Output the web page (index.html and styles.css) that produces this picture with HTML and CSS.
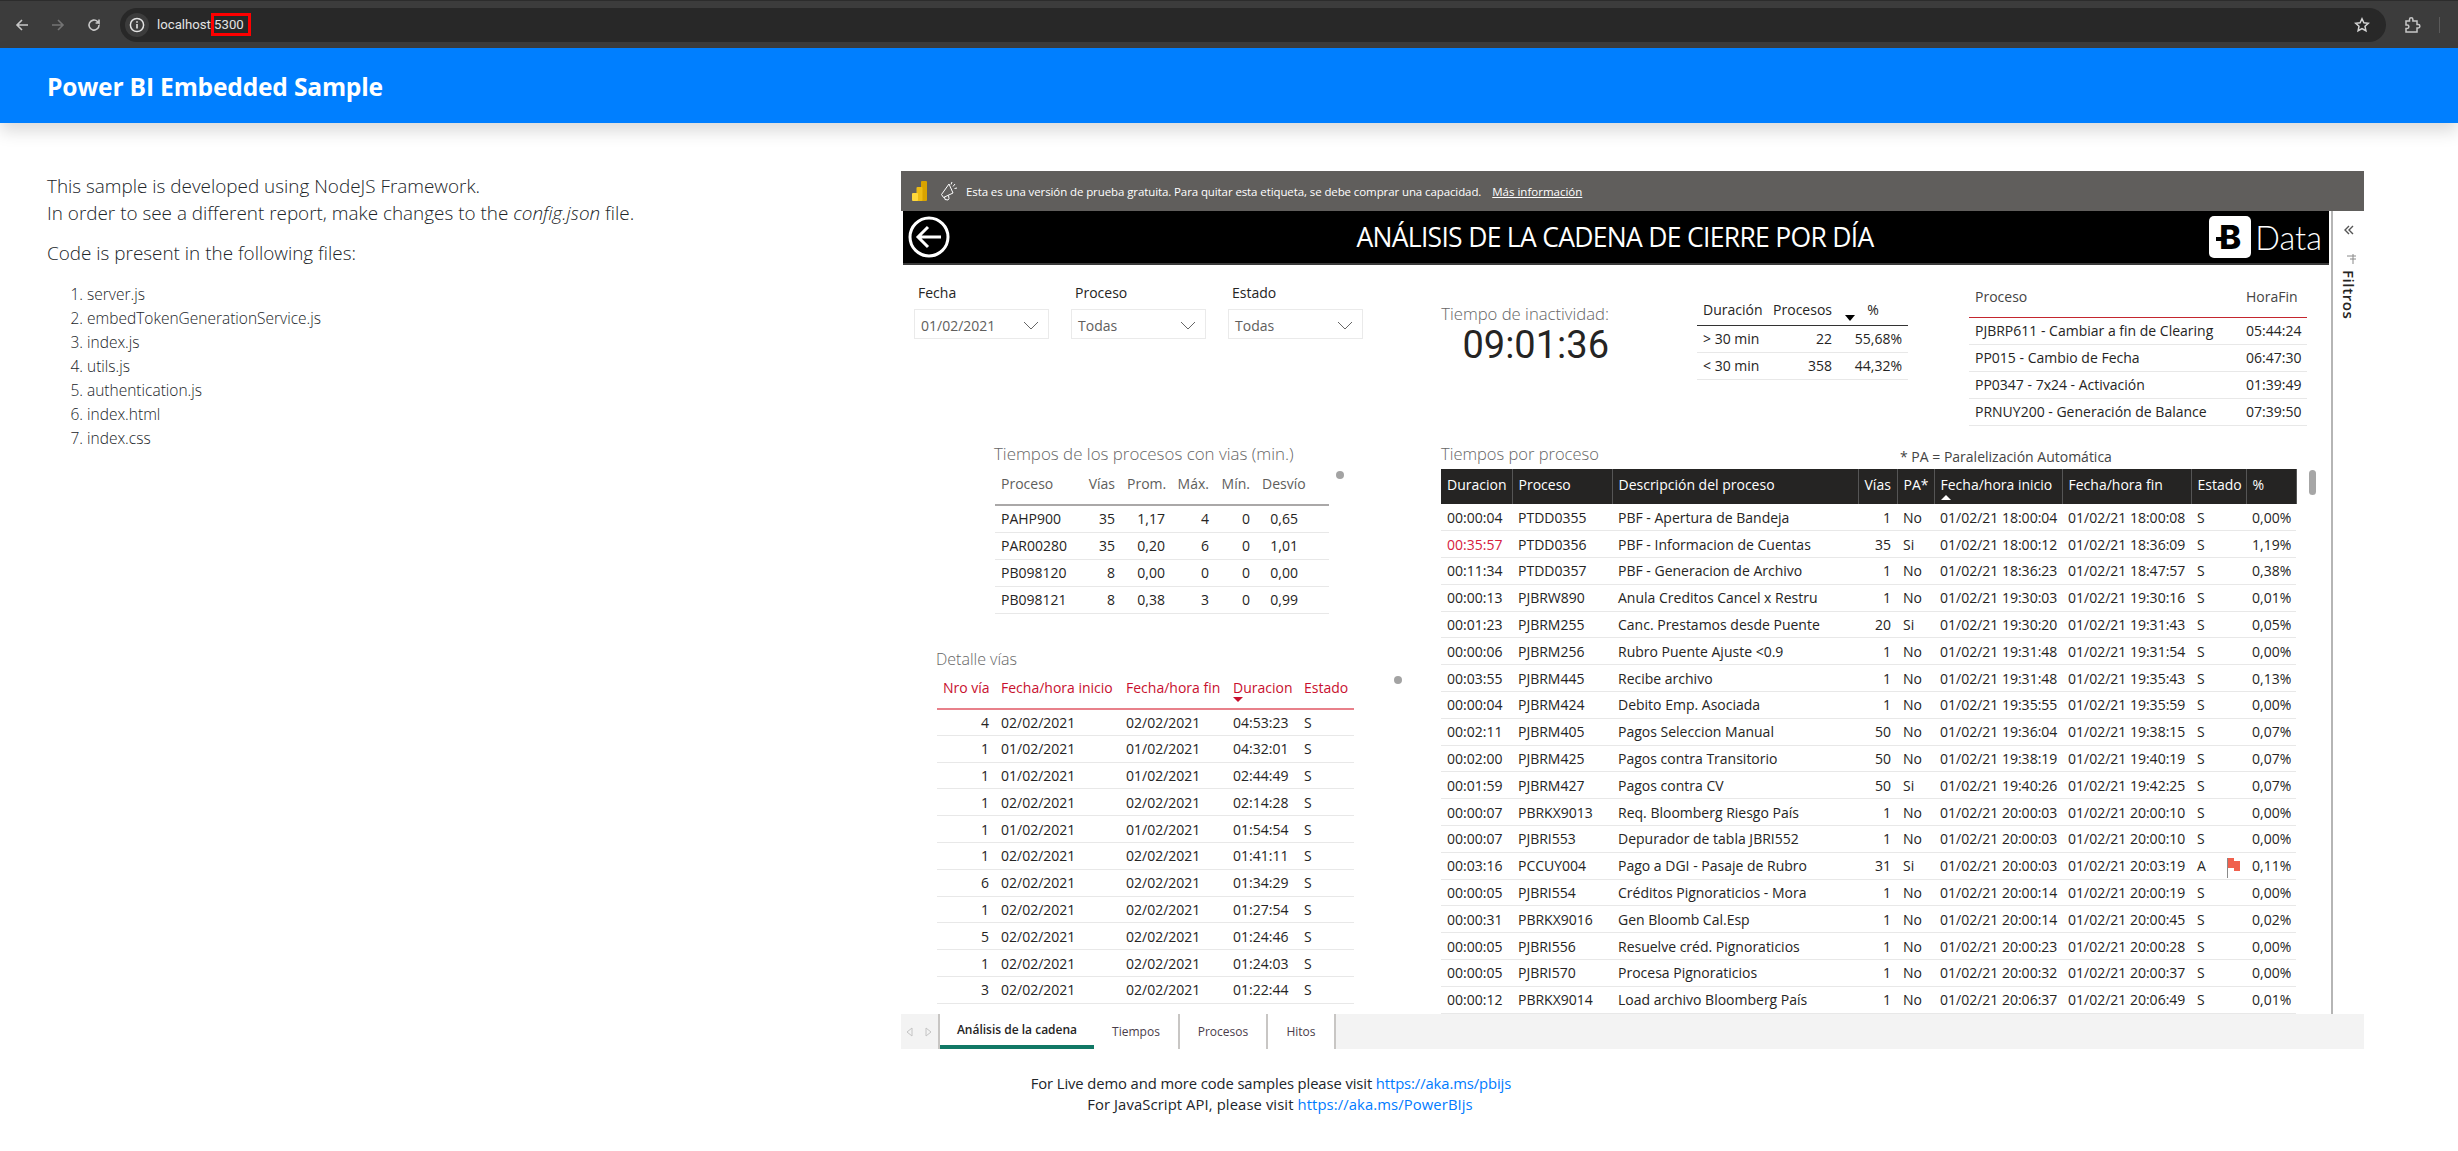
FILE: index.html
```html
<!DOCTYPE html>
<html lang="en">
<head>
  <meta charset="UTF-8">
  <title>Power BI Embedded Sample</title>
  <link rel="stylesheet" href="styles.css">
</head>
<body>

  <div class="browser-bar">
    <svg class="nav-icon" width="16" height="16" viewBox="0 0 16 16"><path d="M14 8H3M8 3L3 8l5 5" fill="none" stroke="#c7c7c7" stroke-width="1.6"/></svg>
    <svg class="nav-icon" width="16" height="16" viewBox="0 0 16 16"><path d="M2 8h11M8 3l5 5-5 5" fill="none" stroke="#747474" stroke-width="1.6"/></svg>
    <svg class="nav-icon" width="16" height="16" viewBox="0 0 16 16"><path d="M13 8a5 5 0 1 1-1.5-3.5L13 6V2.5M13 6H9.6" fill="none" stroke="#c7c7c7" stroke-width="1.6"/></svg>
    <div class="omnibox">
      <span class="site-chip">
        <svg width="16" height="16" viewBox="0 0 16 16"><circle cx="8" cy="8" r="6.6" fill="none" stroke="#e3e3e3" stroke-width="1.5"/><path d="M8 7v4.4M8 4.3v1.5" stroke="#e3e3e3" stroke-width="1.6"/></svg>
      </span>
      <span class="url">localhost:<span class="url-port">5300</span></span>
      <svg class="star" width="16" height="16" viewBox="0 0 16 16"><path d="M8 1.8l1.9 4 4.4.5-3.3 3 .9 4.4L8 11.5l-3.9 2.2.9-4.4-3.3-3 4.4-.5z" fill="none" stroke="#d5d5d5" stroke-width="1.5"/></svg>
    </div>
    <svg class="ext-icon" width="18" height="18" viewBox="0 0 18 18"><path d="M3 5h3.5V3.5a1.7 1.7 0 0 1 3.4 0V5H14v3.6h1.2a1.7 1.7 0 0 1 0 3.4H14v4H3v-3.6h1.2a1.7 1.7 0 0 0 0-3.4H3z" fill="none" stroke="#c7c7c7" stroke-width="1.5"/></svg>
    <span class="bar-sep"></span>
  </div>

  <header class="page-header">Power BI Embedded Sample</header>

  <main class="page-main">
    <section class="intro">
      <p class="intro-text">This sample is developed using NodeJS Framework.<br>In order to see a different report, make changes to the <em>config.json</em> file.</p>
      <p class="intro-text">Code is present in the following files:</p>
      <ol class="file-list">
        <li>server.js</li>
        <li>embedTokenGenerationService.js</li>
        <li>index.js</li>
        <li>utils.js</li>
        <li>authentication.js</li>
        <li>index.html</li>
        <li>index.css</li>
      </ol>
    </section>

    <section class="report">
      <div class="trial-bar">
        <svg class="pbi-logo" width="15" height="20" viewBox="0 0 15 20">
          <rect x="9" y="0" width="6" height="20" rx="1" fill="#d9a300"/>
          <rect x="4.5" y="6" width="6" height="14" rx="1" fill="#eebc14"/>
          <rect x="0" y="12" width="6" height="8" rx="1" fill="#ffd83b"/>
        </svg>
        <svg class="trial-icon" width="18" height="20" viewBox="0 0 18 20"><path d="M9 3L1.5 13.5l2 3 9.5-4.5zM4.5 16l.5 2.5 3 .5 1-1.5-.5-3M12 1l-1 2.5M15 3l-2 2.5M17 7l-2.5.5" fill="none" stroke="#fff" stroke-width="1"/></svg>
        <span class="trial-text">Esta es una versión de prueba gratuita. Para quitar esta etiqueta, se debe comprar una capacidad.</span>
        <a class="trial-link">Más información</a>
      </div>

      <div class="report-body">
        <div class="canvas">
          <div class="report-title">
            <svg class="back-icon" width="42" height="42" viewBox="0 0 42 42"><circle cx="21" cy="21" r="19" fill="none" stroke="#fff" stroke-width="3"/><path d="M33 21H10M20 11L10 21l10 10" fill="none" stroke="#fff" stroke-width="3"/></svg>
            <h1 class="report-heading">ANÁLISIS DE LA CADENA DE CIERRE POR DÍA</h1>
            <div class="brand">
              <span class="brand-mark">B</span>
              <span class="brand-name">Data</span>
            </div>
          </div>

          <div class="top-row">
            <div class="slicer slicer-first">
              <div class="slicer-label">Fecha</div>
              <div class="slicer-box">01/02/2021<svg class="chevron" width="16" height="9" viewBox="0 0 16 9"><path d="M1 1l7 7 7-7" fill="none" stroke="#666" stroke-width="1"/></svg></div>
            </div>
            <div class="slicer">
              <div class="slicer-label">Proceso</div>
              <div class="slicer-box">Todas<svg class="chevron" width="16" height="9" viewBox="0 0 16 9"><path d="M1 1l7 7 7-7" fill="none" stroke="#666" stroke-width="1"/></svg></div>
            </div>
            <div class="slicer">
              <div class="slicer-label">Estado</div>
              <div class="slicer-box">Todas<svg class="chevron" width="16" height="9" viewBox="0 0 16 9"><path d="M1 1l7 7 7-7" fill="none" stroke="#666" stroke-width="1"/></svg></div>
            </div>

            <div class="kpi">
              <div class="kpi-label">Tiempo de inactividad:</div>
              <div class="kpi-value">09:01:36</div>
            </div>

            <table class="grid summary-table">
              <colgroup><col class="w70"><col class="w71"><col class="w70"></colgroup>
              <thead>
                <tr><th>Duración</th><th class="num sort-col">Procesos</th><th class="center">%</th></tr>
              </thead>
              <tbody>
                <tr><td>&gt; 30 min</td><td class="num">22</td><td class="num">55,68%</td></tr>
                <tr><td>&lt; 30 min</td><td class="num">358</td><td class="num">44,32%</td></tr>
              </tbody>
            </table>

            <table class="grid end-table">
              <colgroup><col class="w271"><col class="w67"></colgroup>
              <thead>
                <tr><th>Proceso</th><th>HoraFin</th></tr>
              </thead>
              <tbody>
                <tr><td>PJBRP611 - Cambiar a fin de Clearing</td><td>05:44:24</td></tr>
                <tr><td>PP015 - Cambio de Fecha</td><td>06:47:30</td></tr>
                <tr><td>PP0347 - 7x24 - Activación</td><td>01:39:49</td></tr>
                <tr><td>PRNUY200 - Generación de Balance</td><td>07:39:50</td></tr>
              </tbody>
            </table>
          </div>

          <div class="bottom-row">
            <div class="left-col">
              <div class="routes-block">
                <h2 class="visual-title">Tiempos de los procesos con vias (min.)</h2>
                <div class="visual-row">
                  <table class="grid routes-table">
                    <colgroup><col class="w87"><col class="w39"><col class="w50"><col class="w44"><col class="w41"><col class="w73"></colgroup>
                    <thead>
                      <tr><th>Proceso</th><th class="num">Vías</th><th class="num">Prom.</th><th class="num">Máx.</th><th class="num">Mín.</th><th>Desvío</th></tr>
                    </thead>
                    <tbody>
                      <tr><td>PAHP900</td><td class="num">35</td><td class="num">1,17</td><td class="num">4</td><td class="num">0</td><td class="num desvio">0,65</td></tr>
                      <tr><td>PAR00280</td><td class="num">35</td><td class="num">0,20</td><td class="num">6</td><td class="num">0</td><td class="num desvio">1,01</td></tr>
                      <tr><td>PB098120</td><td class="num">8</td><td class="num">0,00</td><td class="num">0</td><td class="num">0</td><td class="num desvio">0,00</td></tr>
                      <tr><td>PB098121</td><td class="num">8</td><td class="num">0,38</td><td class="num">3</td><td class="num">0</td><td class="num desvio">0,99</td></tr>
                    </tbody>
                  </table>
                  <span class="dot dot-routes"></span>
                </div>
              </div>

              <div class="detail-block">
                <h2 class="visual-title">Detalle vías</h2>
                <div class="visual-row">
                  <table class="grid detail-table">
                    <colgroup><col class="w58"><col class="w125"><col class="w107"><col class="w71"><col class="w56"></colgroup>
                    <thead>
                      <tr><th class="num">Nro vía</th><th>Fecha/hora inicio</th><th>Fecha/hora fin</th><th class="sort-down">Duracion</th><th>Estado</th></tr>
                    </thead>
                    <tbody>
                      <tr><td class="num">4</td><td>02/02/2021</td><td>02/02/2021</td><td>04:53:23</td><td>S</td></tr>
                      <tr><td class="num">1</td><td>01/02/2021</td><td>01/02/2021</td><td>04:32:01</td><td>S</td></tr>
                      <tr><td class="num">1</td><td>01/02/2021</td><td>01/02/2021</td><td>02:44:49</td><td>S</td></tr>
                      <tr><td class="num">1</td><td>02/02/2021</td><td>02/02/2021</td><td>02:14:28</td><td>S</td></tr>
                      <tr><td class="num">1</td><td>01/02/2021</td><td>01/02/2021</td><td>01:54:54</td><td>S</td></tr>
                      <tr><td class="num">1</td><td>02/02/2021</td><td>02/02/2021</td><td>01:41:11</td><td>S</td></tr>
                      <tr><td class="num">6</td><td>02/02/2021</td><td>02/02/2021</td><td>01:34:29</td><td>S</td></tr>
                      <tr><td class="num">1</td><td>02/02/2021</td><td>02/02/2021</td><td>01:27:54</td><td>S</td></tr>
                      <tr><td class="num">5</td><td>02/02/2021</td><td>02/02/2021</td><td>01:24:46</td><td>S</td></tr>
                      <tr><td class="num">1</td><td>02/02/2021</td><td>02/02/2021</td><td>01:24:03</td><td>S</td></tr>
                      <tr><td class="num">3</td><td>02/02/2021</td><td>02/02/2021</td><td>01:22:44</td><td>S</td></tr>
                    </tbody>
                  </table>
                  <span class="dot dot-detail"></span>
                </div>
              </div>
            </div>

            <div class="right-col">
              <div class="process-head">
                <h2 class="visual-title">Tiempos por proceso</h2>
                <span class="pa-note">* PA = Paralelización Automática</span>
              </div>
              <div class="visual-row">
                <table class="grid process-table">
                  <colgroup><col class="w71"><col class="w100"><col class="w246"><col class="w39"><col class="w37"><col class="w128"><col class="w129"><col class="w55"><col class="w50"></colgroup>
                  <thead>
                    <tr><th>Duracion</th><th>Proceso</th><th>Descripción del proceso</th><th>Vías</th><th>PA*</th><th class="sort-up">Fecha/hora inicio</th><th>Fecha/hora fin</th><th>Estado</th><th>%</th></tr>
                  </thead>
                  <tbody>
                    <tr><td>00:00:04</td><td>PTDD0355</td><td>PBF - Apertura de Bandeja</td><td class="num">1</td><td>No</td><td>01/02/21 18:00:04</td><td>01/02/21 18:00:08</td><td>S</td><td class="num">0,00%</td></tr>
                    <tr><td class="late">00:35:57</td><td>PTDD0356</td><td>PBF - Informacion de Cuentas</td><td class="num">35</td><td>Si</td><td>01/02/21 18:00:12</td><td>01/02/21 18:36:09</td><td>S</td><td class="num">1,19%</td></tr>
                    <tr><td>00:11:34</td><td>PTDD0357</td><td>PBF - Generacion de Archivo</td><td class="num">1</td><td>No</td><td>01/02/21 18:36:23</td><td>01/02/21 18:47:57</td><td>S</td><td class="num">0,38%</td></tr>
                    <tr><td>00:00:13</td><td>PJBRW890</td><td>Anula Creditos Cancel x Restru</td><td class="num">1</td><td>No</td><td>01/02/21 19:30:03</td><td>01/02/21 19:30:16</td><td>S</td><td class="num">0,01%</td></tr>
                    <tr><td>00:01:23</td><td>PJBRM255</td><td>Canc. Prestamos desde Puente</td><td class="num">20</td><td>Si</td><td>01/02/21 19:30:20</td><td>01/02/21 19:31:43</td><td>S</td><td class="num">0,05%</td></tr>
                    <tr><td>00:00:06</td><td>PJBRM256</td><td>Rubro Puente Ajuste &lt;0.9</td><td class="num">1</td><td>No</td><td>01/02/21 19:31:48</td><td>01/02/21 19:31:54</td><td>S</td><td class="num">0,00%</td></tr>
                    <tr><td>00:03:55</td><td>PJBRM445</td><td>Recibe archivo</td><td class="num">1</td><td>No</td><td>01/02/21 19:31:48</td><td>01/02/21 19:35:43</td><td>S</td><td class="num">0,13%</td></tr>
                    <tr><td>00:00:04</td><td>PJBRM424</td><td>Debito Emp. Asociada</td><td class="num">1</td><td>No</td><td>01/02/21 19:35:55</td><td>01/02/21 19:35:59</td><td>S</td><td class="num">0,00%</td></tr>
                    <tr><td>00:02:11</td><td>PJBRM405</td><td>Pagos Seleccion Manual</td><td class="num">50</td><td>No</td><td>01/02/21 19:36:04</td><td>01/02/21 19:38:15</td><td>S</td><td class="num">0,07%</td></tr>
                    <tr><td>00:02:00</td><td>PJBRM425</td><td>Pagos contra Transitorio</td><td class="num">50</td><td>No</td><td>01/02/21 19:38:19</td><td>01/02/21 19:40:19</td><td>S</td><td class="num">0,07%</td></tr>
                    <tr><td>00:01:59</td><td>PJBRM427</td><td>Pagos contra CV</td><td class="num">50</td><td>Si</td><td>01/02/21 19:40:26</td><td>01/02/21 19:42:25</td><td>S</td><td class="num">0,07%</td></tr>
                    <tr><td>00:00:07</td><td>PBRKX9013</td><td>Req. Bloomberg Riesgo País</td><td class="num">1</td><td>No</td><td>01/02/21 20:00:03</td><td>01/02/21 20:00:10</td><td>S</td><td class="num">0,00%</td></tr>
                    <tr><td>00:00:07</td><td>PJBRI553</td><td>Depurador de tabla JBRI552</td><td class="num">1</td><td>No</td><td>01/02/21 20:00:03</td><td>01/02/21 20:00:10</td><td>S</td><td class="num">0,00%</td></tr>
                    <tr><td>00:03:16</td><td>PCCUY004</td><td>Pago a DGI - Pasaje de Rubro</td><td class="num">31</td><td>Si</td><td>01/02/21 20:00:03</td><td>01/02/21 20:03:19</td><td>A<svg class="flag" width="13" height="20" viewBox="0 0 13 20"><path d="M.5 0v20" stroke="#8a8a8a"/><path d="M1 0h6v3h6v10H7v-3H1z" fill="#f0604d"/></svg></td><td class="num">0,11%</td></tr>
                    <tr><td>00:00:05</td><td>PJBRI554</td><td>Créditos Pignoraticios - Mora</td><td class="num">1</td><td>No</td><td>01/02/21 20:00:14</td><td>01/02/21 20:00:19</td><td>S</td><td class="num">0,00%</td></tr>
                    <tr><td>00:00:31</td><td>PBRKX9016</td><td>Gen Bloomb Cal.Esp</td><td class="num">1</td><td>No</td><td>01/02/21 20:00:14</td><td>01/02/21 20:00:45</td><td>S</td><td class="num">0,02%</td></tr>
                    <tr><td>00:00:05</td><td>PJBRI556</td><td>Resuelve créd. Pignoraticios</td><td class="num">1</td><td>No</td><td>01/02/21 20:00:23</td><td>01/02/21 20:00:28</td><td>S</td><td class="num">0,00%</td></tr>
                    <tr><td>00:00:05</td><td>PJBRI570</td><td>Procesa Pignoraticios</td><td class="num">1</td><td>No</td><td>01/02/21 20:00:32</td><td>01/02/21 20:00:37</td><td>S</td><td class="num">0,00%</td></tr>
                    <tr><td>00:00:12</td><td>PBRKX9014</td><td>Load archivo Bloomberg País</td><td class="num">1</td><td>No</td><td>01/02/21 20:06:37</td><td>01/02/21 20:06:49</td><td>S</td><td class="num">0,01%</td></tr>
                  </tbody>
                </table>
                <span class="scroll-thumb"></span>
              </div>
            </div>
          </div>
        </div>

        <aside class="filter-pane">
          <svg width="10" height="10" viewBox="0 0 10 10"><path d="M5 1L1 5l4 4M9 1L5 5l4 4" fill="none" stroke="#555" stroke-width="1.4"/></svg>
          <svg class="filter-icon" width="9" height="10" viewBox="0 0 9 10"><path d="M0 2h9M3 5h6M6 0v10" stroke="#8a8a8a" stroke-width="1"/></svg>
          <span class="filter-label">Filtros</span>
        </aside>
      </div>

      <nav class="tabs">
        <div class="tab-arrows">
          <svg width="7" height="10" viewBox="0 0 7 10"><path d="M6 1L1 5l5 4z" fill="none" stroke="#c4c4c4"/></svg>
          <svg width="7" height="10" viewBox="0 0 7 10"><path d="M1 1l5 4-5 4z" fill="none" stroke="#c4c4c4"/></svg>
        </div>
        <span class="tab tab-active">Análisis de la cadena</span>
        <span class="tab tab-times">Tiempos</span>
        <span class="tab tab-process">Procesos</span>
        <span class="tab tab-hitos">Hitos</span>
      </nav>
    </section>
  </main>

  <footer class="page-footer">
    <div class="footer-first">For Live demo and more code samples please visit <a class="footer-link">https://aka.ms/pbijs</a></div>
    <div class="footer-second">For JavaScript API, please visit <a class="footer-link">https://aka.ms/PowerBIjs</a></div>
  </footer>

</body>
</html>
```

FILE: styles.css
```css
* {
  box-sizing: border-box;
}

body {
  margin: 0;
  height: 1151px;
  overflow: hidden;
  background: #fff;
  color: #212529;
  font-family: 'Open Sans', 'Noto Sans', sans-serif;
  font-size: 14px;
}

/* browser chrome */
.browser-bar {
  display: flex;
  align-items: center;
  height: 48px;
  padding-left: 14px;
  background: #3c3c3c;
  border-top: 1px solid #2c2c2c;
}

.nav-icon {
  margin-right: 20px;
}

.omnibox {
  display: flex;
  align-items: center;
  width: 2266px;
  height: 34px;
  margin-left: -2px;
  padding: 0 16px 0 5px;
  border-radius: 17px;
  background: #282828;
  color: #e3e3e3;
  font-family: Roboto, sans-serif;
  font-size: 13.2px;
}

.site-chip {
  display: flex;
  align-items: center;
  justify-content: center;
  width: 24px;
  height: 24px;
  margin-right: 8px;
  border-radius: 50%;
  background: #3c3c3c;
}

.url {
  flex: 1;
}

.url-port {
  display: inline-block;
  padding: 0 4px 0 0;
  line-height: 17px;
  outline: 3px solid #f00;
  outline-offset: 0;
}

.ext-icon {
  margin-left: 17px;
}

.bar-sep {
  width: 1px;
  height: 16px;
  margin-left: 18px;
  background: #5a5a5a;
}

/* page */
.page-header {
  display: flex;
  align-items: center;
  height: 75px;
  padding: 2px 0 0 47px;
  background: #007fff;
  box-shadow: 0 8px 16px rgba(0, 0, 0, 0.15);
  color: #fff;
  font-size: 24.6px;
  font-weight: 700;
  letter-spacing: -0.2px;
}

.page-main {
  display: flex;
  padding-top: 48px;
}

.intro {
  width: 901px;
  padding: 2px 0 0 47px;
}

.intro-text {
  margin: 0 0 14px;
  font-size: 18.9px;
  line-height: 26.5px;
  font-weight: 300;
  color: #212529;
}

.file-list {
  margin: 15px 0 0;
  padding-left: 40px;
  font-size: 15.5px;
  line-height: 24px;
  font-weight: 300;
}

.page-footer {
  margin-top: 24px;
  padding-left: 102px;
  text-align: center;
  font-size: 14.8px;
  line-height: 21px;
}

.footer-first {
  padding-right: 18px;
  letter-spacing: -0.1px;
}

.footer-second {
  letter-spacing: 0.1px;
}

.footer-link {
  color: #007bff;
}

/* report frame */
.report {
  width: 1463px;
}

.trial-bar {
  display: flex;
  align-items: center;
  height: 40px;
  padding-left: 11px;
  background: #605e5c;
  color: #fff;
  font-size: 11.5px;
}

.trial-icon {
  margin: 0 8px 0 13px;
}

.trial-text {
  letter-spacing: -0.1px;
}

.trial-link {
  margin-left: 11px;
  text-decoration: underline;
}

.report-body {
  display: flex;
  height: 803px;
  margin-left: 2px;
}

.canvas {
  width: 1428px;
  overflow: hidden;
}

.report-title {
  display: grid;
  grid-template-columns: 1fr auto 1fr;
  align-items: center;
  width: 1426px;
  height: 54px;
  padding: 0 7px 0 5px;
  background: #000;
  border-bottom: 2px solid #3a3a3a;
}

.report-heading {
  margin: 0;
  color: #fff;
  font-size: 26.5px;
  font-weight: 400;
  letter-spacing: -0.7px;
}

.brand {
  display: flex;
  align-items: center;
  justify-content: flex-end;
}

.brand-mark {
  position: relative;
  width: 42px;
  height: 42px;
  border-radius: 5px;
  background: #fff;
  color: #000;
  font-family: Inter, sans-serif;
  font-size: 33px;
  font-weight: 800;
  line-height: 42px;
  text-align: center;
}

/* the notch that sticks out on the left of the B */
.brand-mark::before {
  content: "";
  position: absolute;
  left: 7px;
  top: 21px;
  width: 9px;
  height: 4px;
  background: #000;
}

.brand-name {
  margin-left: 4px;
  color: #fff;
  font-family: Lato, sans-serif;
  font-size: 32.5px;
  font-weight: 300;
}

.top-row {
  display: flex;
  align-items: flex-start;
  height: 175px;
}

.slicer {
  width: 135px;
  margin: 18px 0 0 22px;
}

.slicer-first {
  margin-left: 11px;
}

.slicer-label {
  padding-left: 4px;
  line-height: 20px;
  margin-bottom: 6px;
  color: #252423;
}

.slicer-box {
  display: flex;
  align-items: center;
  justify-content: space-between;
  height: 30px;
  padding: 3px 9px 0 6px;
  border: 1px solid #eaeaea;
  color: #605e5c;
}

.kpi {
  width: 168px;
  margin: 37px 0 0 78px;
  text-align: right;
}

.kpi-label {
  color: #666;
  font-size: 16.7px;
  font-weight: 300;
  line-height: 24px;
  white-space: nowrap;
}

.kpi-value {
  color: #252423;
  font-family: Roboto, sans-serif;
  font-size: 38px;
  line-height: 38px;
}

/* tables */
.grid {
  border-collapse: collapse;
  table-layout: fixed;
  color: #252423;
  font-size: 14px;
}

.grid th,
.grid td {
  padding: 0 6px;
  overflow: hidden;
  font-weight: 400;
  text-align: left;
  white-space: nowrap;
}

.grid td {
  height: 27px;
  border-bottom: 1px solid #e8e8e8;
}

.grid .num {
  text-align: right;
}

.grid .center {
  text-align: center;
}

.w39 { width: 39px; }
.w37 { width: 37px; }
.w41 { width: 41px; }
.w44 { width: 44px; }
.w50 { width: 50px; }
.w55 { width: 55px; }
.w56 { width: 56px; }
.w58 { width: 58px; }
.w67 { width: 67px; }
.w70 { width: 70px; }
.w71 { width: 71px; }
.w73 { width: 73px; }
.w87 { width: 87px; }
.w100 { width: 100px; }
.w107 { width: 107px; }
.w125 { width: 125px; }
.w128 { width: 128px; }
.w129 { width: 129px; }
.w246 { width: 246px; }
.w271 { width: 271px; }

.summary-table {
  width: 211px;
  margin: 30px 0 0 88px;
}

.summary-table th {
  position: relative;
  height: 30px;
  border-bottom: 1px solid #333;
}

.sort-col::after {
  content: "";
  position: absolute;
  right: -17px;
  bottom: 4px;
  border: 5px solid transparent;
  border-top: 6px solid #000;
  border-bottom: 0;
}

.summary-table .sort-col {
  overflow: visible;
}

.end-table {
  width: 338px;
  margin: 12px 0 0 61px;
}

.end-table th {
  height: 40px;
  border-bottom: 1px solid #c4262e;
  color: #444;
}

.bottom-row {
  display: flex;
  height: 574px;
  overflow: hidden;
}

.left-col {
  width: 538px;
  padding-top: 2px;
}

.visual-title {
  margin: 0;
  color: #666;
  font-size: 16px;
  font-weight: 300;
  line-height: 24px;
}

.visual-row {
  display: flex;
  align-items: flex-start;
}

.routes-block {
  margin-left: 91px;
}

.routes-block .visual-title {
  font-size: 16.9px;
}

.routes-block .visual-row {
  margin: 4px 0 0 1px;
}

.routes-table {
  width: 334px;
}

.routes-table th {
  height: 35px;
  padding-bottom: 8px;
  border-bottom: 2px solid #aaa8a8;
  color: #605e5c;
}

.grid .desvio {
  padding-right: 31px;
}

.detail-block {
  margin: 33px 0 0 33px;
}

.detail-block .visual-row {
  margin: 3px 0 0 1px;
}

.detail-table {
  width: 417px;
}

.detail-table th {
  position: relative;
  height: 35px;
  padding-bottom: 6px;
  border-bottom: 2px solid #e8808a;
  color: #c8102e;
}

.detail-table td,
.process-table td {
  height: 26.8px;
}

.sort-down::after {
  content: "";
  position: absolute;
  left: 6px;
  bottom: 6px;
  border: 5px solid transparent;
  border-top: 5px solid #c8102e;
  border-bottom: 0;
}

.dot {
  flex: none;
  width: 8px;
  height: 8px;
  border-radius: 50%;
  background: #a3a3a3;
}

.dot-routes {
  margin: 1px 0 0 7px;
}

.dot-detail {
  margin: 2px 0 0 40px;
}

.process-head {
  display: flex;
  height: 29px;
  padding-top: 2px;
}

.process-head .visual-title {
  width: 459px;
  font-size: 16.5px;
}

.pa-note {
  padding-top: 6px;
  color: #444;
  font-size: 14px;
  line-height: 18px;
}

.process-table {
  width: 855px;
}

.process-table th {
  position: relative;
  height: 35px;
  padding-bottom: 5px;
  border-right: 1px solid #555;
  background: #252423;
  color: #fff;
}

.process-table .late {
  color: #d6203e;
}

.sort-up::after {
  content: "";
  position: absolute;
  left: 6px;
  bottom: 4px;
  border: 5px solid transparent;
  border-bottom: 5px solid #fff;
  border-top: 0;
}

.flag {
  margin: -6px 0 -6px 21px;
  vertical-align: middle;
}

.scroll-thumb {
  flex: none;
  width: 7px;
  height: 25px;
  margin: 1px 0 0 12px;
  border-radius: 4px;
  background: #a6a6a6;
}

/* filter pane */
.filter-pane {
  display: flex;
  flex-direction: column;
  align-items: center;
  width: 33px;
  padding-top: 14px;
  border-left: 2px solid #b5b5b5;
}

.filter-icon {
  margin: 19px 0 0 5px;
}

.filter-label {
  margin-top: 6px;
  color: #252423;
  font-size: 15px;
  font-weight: 600;
  letter-spacing: 0.6px;
  writing-mode: vertical-rl;
}

/* page tabs */
.tabs {
  display: flex;
  height: 35px;
  background: #f3f3f3;
}

.tab-arrows {
  display: flex;
  align-items: center;
  justify-content: space-between;
  width: 39px;
  padding: 0 6px 0 5px;
  border-right: 2px solid #c8c6c4;
}

.tab {
  display: flex;
  align-items: center;
  justify-content: center;
  background: #fff;
  border-right: 2px solid #c8c6c4;
  color: #4a3d4a;
  font-size: 12px;
}

.tab-active {
  width: 154px;
  border-right: 0;
  border-bottom: 4px solid #117865;
  color: #252423;
  font-weight: 600;
}

.tab-times {
  width: 86px;
}

.tab-process {
  width: 88px;
}

.tab-hitos {
  width: 68px;
}
```
